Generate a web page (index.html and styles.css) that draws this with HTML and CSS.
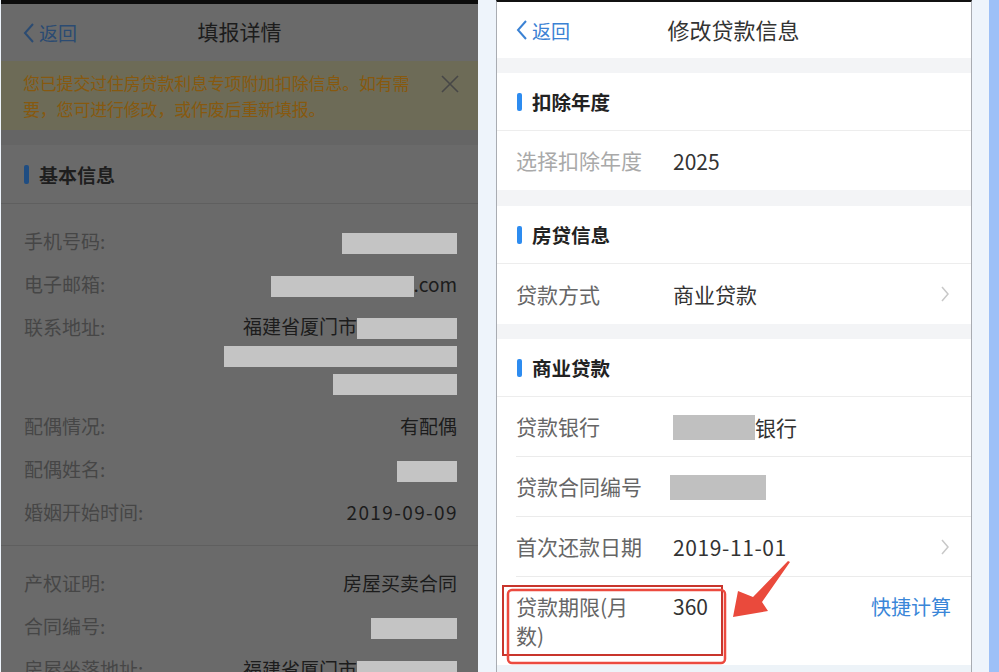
FILE: index.html
```html
<!DOCTYPE html>
<html lang="zh-CN">
<head>
    <meta charset="UTF-8">
    <meta name="viewport" content="width=device-width, initial-scale=1.0">
    <title>修改贷款信息</title>
    <link rel="stylesheet" href="styles.css">
</head>
<body>
    <div class="screen">
        <!-- 左: 填报详情 (暗) -->
        <section class="phone dim">
            <header class="nav">
                <a class="back" href="#">
                    <svg width="12" height="22" viewBox="0 0 12 22"><polyline points="10,2 2,11 10,20" fill="none" stroke="currentColor" stroke-width="2"/></svg>
                    <span>返回</span>
                </a>
                <h1 class="nav-title">填报详情</h1>
                <span></span>
            </header>
            <div class="notice">
                <p>您已提交过住房贷款利息专项附加扣除信息。如有需<br>要，您可进行修改，或作废后重新填报。</p>
                <svg class="close" width="20" height="20" viewBox="0 0 20 20"><path d="M2 2L18 18M18 2L2 18" stroke="currentColor" stroke-width="1.6"/></svg>
            </div>
            <div class="band"></div>
            <div class="sec-head"><i class="bar"></i>基本信息</div>
            <div class="info">
                <div class="row"><span class="label">手机号码:</span><span class="value"><i class="mask" style="width:115px"></i></span></div>
                <div class="row"><span class="label">电子邮箱:</span><span class="value"><i class="mask" style="width:143px"></i>.com</span></div>
                <div class="row addr">
                    <span class="label">联系地址:</span>
                    <span class="value lines">
                        <span>福建省厦门市<i class="mask" style="width:100px"></i></span>
                        <span><i class="mask" style="width:233px"></i></span>
                        <span><i class="mask" style="width:124px"></i></span>
                    </span>
                </div>
                <div class="row"><span class="label">配偶情况:</span><span class="value">有配偶</span></div>
                <div class="row"><span class="label">配偶姓名:</span><span class="value"><i class="mask" style="width:60px"></i></span></div>
                <div class="row"><span class="label">婚姻开始时间:</span><span class="value num">2019-09-09</span></div>
            </div>
            <div class="info">
                <div class="row"><span class="label">产权证明:</span><span class="value">房屋买卖合同</span></div>
                <div class="row"><span class="label">合同编号:</span><span class="value"><i class="mask" style="width:86px"></i></span></div>
                <div class="row"><span class="label">房屋坐落地址:</span><span class="value">福建省厦门市<i class="mask" style="width:100px"></i></span></div>
            </div>
        </section>

        <div class="gutter"></div>

        <!-- 右: 修改贷款信息 -->
        <section class="phone light">
            <header class="nav">
                <a class="back" href="#">
                    <svg width="12" height="22" viewBox="0 0 12 22"><polyline points="10,2 2,11 10,20" fill="none" stroke="currentColor" stroke-width="2"/></svg>
                    <span>返回</span>
                </a>
                <h1 class="nav-title">修改贷款信息</h1>
                <span></span>
            </header>

            <div class="group">
                <div class="group-head"><i class="bar"></i>扣除年度</div>
                <div class="item"><span class="item-label muted">选择扣除年度</span><span class="item-value">2025</span></div>
            </div>

            <div class="group second">
                <div class="group-head"><i class="bar"></i>房贷信息</div>
                <div class="item wide">
                    <span class="item-label">贷款方式</span><span class="item-value">商业贷款</span>
                    <svg class="arrow" width="10" height="18" viewBox="0 0 10 18"><polyline points="2,2 8,9 2,16" fill="none" stroke="#c8c8c8" stroke-width="1.5"/></svg>
                </div>
            </div>

            <div class="group">
                <div class="group-head"><i class="bar"></i>商业贷款</div>
                <div class="item inset"><span class="item-label">贷款银行</span><span class="item-value"><i class="mask" style="width:82px"></i>银行</span></div>
                <div class="item inset"><span class="item-label">贷款合同编号</span><span class="item-value"><i class="mask shift" style="width:96px"></i></span></div>
                <div class="item inset">
                    <span class="item-label">首次还款日期</span><span class="item-value num">2019-11-01</span>
                    <svg class="arrow" width="10" height="18" viewBox="0 0 10 18"><polyline points="2,2 8,9 2,16" fill="none" stroke="#c8c8c8" stroke-width="1.5"/></svg>
                </div>
                <div class="item tall">
                    <span class="item-label">贷款期限(月数)</span><span class="item-value">360</span>
                    <a class="calc" href="#">快捷计算</a>
                </div>
            </div>
            <div class="foot"></div>
        </section>

        <div class="gutter narrow"></div>
        <div class="edge"></div>

        <!-- 标注 -->
        <svg class="mark" width="999" height="672" viewBox="0 0 999 672">
            <rect x="503" y="586" width="219" height="69" fill="none" stroke="#c8352c" stroke-width="2"/>
            <rect x="508" y="590" width="217" height="73" rx="4" fill="none" stroke="#ec4a3f" stroke-width="2.5"/>
            <polygon points="790,562 762,602 768,611 733,617 738,591 753,597 788,561" fill="#ea4a3c"/>
        </svg>
    </div>
</body>
</html>
```

FILE: styles.css
```css
body {
    margin: 0;
    padding: 0;
    background: #eef4fb;
    font-family: "Noto Sans CJK SC", "Noto Sans", sans-serif;
}

.screen {
    width: 999px;
    height: 672px;
    display: flex;
    position: relative;
    overflow: hidden;
}

.phone {
    display: flex;
    flex-direction: column;
    flex-shrink: 0;
    height: 672px;
    overflow: hidden;
    box-sizing: border-box;
}

.phone > * {
    flex-shrink: 0;
}

.gutter {
    width: 18px;
    flex-shrink: 0;
}

.gutter.narrow {
    width: 17px;
}

.edge {
    width: 10px;
    background: #9dc0f7;
    flex-shrink: 0;
}

.nav {
    display: grid;
    grid-template-columns: 1fr auto 1fr;
    align-items: center;
}

.back {
    display: flex;
    align-items: center;
    gap: 4px;
    text-decoration: none;
}

.nav-title {
    margin: 0;
    font-weight: 400;
}

.mask {
    display: inline-block;
    vertical-align: middle;
}

.num {
    letter-spacing: 0.6px;
}

/* ---------- 左侧 ---------- */
.dim {
    width: 477px;
    margin-left: 1px;
    background: #6a6a6a;
    border-top: 4px solid #0c0c0c;
}

.dim .nav {
    height: 57px;
    padding: 0 22px;
}

.dim .back {
    color: #2b4b72;
    font-size: 19px;
}

.dim .nav-title {
    font-size: 21px;
    color: #1c1c1c;
    margin-top: -3px;
}

.notice {
    height: 69px;
    background: #6d6b57;
    display: flex;
    align-items: flex-start;
    justify-content: space-between;
    padding: 0 18px 0 22px;
    box-sizing: border-box;
}

.notice p {
    margin: 9px 0 0;
    font-size: 17px;
    line-height: 26px;
    color: #87590f;
    letter-spacing: -0.2px;
}

.notice .close {
    color: #474747;
    margin-top: 13px;
}

.band {
    height: 15px;
    background: #656565;
}

.sec-head {
    height: 58px;
    display: flex;
    align-items: center;
    padding-left: 23px;
    font-size: 19px;
    font-weight: 700;
    color: #1e1e1e;
    border-bottom: 1px solid #5f5f5f;
}

.bar {
    display: inline-block;
    width: 5px;
    height: 19px;
    border-radius: 2px;
    margin-right: 10px;
}

.dim .bar {
    background: #1f4d82;
}

.info {
    padding: 15px 21px 12px 23px;
    border-bottom: 1px solid #5f5f5f;
}

.row {
    display: flex;
    justify-content: space-between;
    font-size: 19px;
    line-height: 43px;
}

.row .label {
    color: #464646;
}

.row .value {
    color: #1c1c1c;
    text-align: right;
}

.row .value.num {
    letter-spacing: 1.4px;
    margin-right: -1px;
}

.dim .mask {
    height: 21px;
    background: #c4c4c4;
}

.row.addr {
    padding-bottom: 8px;
}

.value.lines {
    display: flex;
    flex-direction: column;
    align-items: flex-end;
    padding-top: 7px;
    line-height: 28px;
}

/* ---------- 右侧 ---------- */
.light {
    width: 476px;
    background: #f3f4f6;
    border-left: 1px solid #a9acb2;
    border-right: 1px solid #a9acb2;
    border-top: 2px solid #111;
}

.light .nav {
    height: 56px;
    padding: 0 20px 0 19px;
    background: #fff;
}

.light .back {
    color: #3b82d4;
    font-size: 19px;
}

.light .nav-title {
    font-size: 22px;
    color: #333;
    margin-top: -2px;
}

.group {
    margin-top: 15px;
    background: #fff;
}

.group.second {
    margin-top: 16px;
}

.group-head {
    height: 57px;
    display: flex;
    align-items: center;
    padding-left: 20px;
    font-size: 19.5px;
    font-weight: 700;
    color: #222;
    border-bottom: 1px solid #ededed;
}

.light .bar {
    background: #2d8cf0;
    height: 18px;
}

.item {
    height: 59px;
    display: flex;
    align-items: center;
    padding: 0 20px 0 19px;
    font-size: 21px;
}

.item.wide {
    height: 60px;
}

.item.inset {
    border-bottom: 1px solid #ebebeb;
    margin-left: 19px;
    padding-left: 0;
}

.item-label {
    width: 128px;
    margin-right: 29px;
    color: #666;
    line-height: 29px;
    flex-shrink: 0;
}

.item-label.muted {
    color: #a9a9a9;
}

.item-value {
    flex: 1;
    color: #333;
}

.light .mask {
    height: 25px;
    background: #c0c0c0;
    margin-top: -4px;
}

.light .mask.shift {
    margin-left: -3px;
}

.arrow {
    margin-right: 1px;
}

.item.tall {
    height: 88px;
    align-items: flex-start;
    padding-top: 15px;
    box-sizing: border-box;
    line-height: 29px;
}

.calc {
    color: #3a86d8;
    text-decoration: none;
    font-size: 20px;
}

.foot {
    flex: 1;
    background: #edf3f8;
}

.mark {
    position: absolute;
    top: 0;
    left: 0;
    pointer-events: none;
}
```
